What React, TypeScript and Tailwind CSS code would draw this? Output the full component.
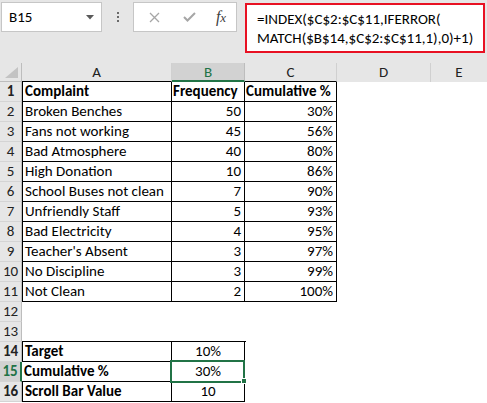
import React from "react";

const FONT = { fontFamily: 'Carlito, "Liberation Sans", Arial, sans-serif' };

type Row = { a?: string; b?: string; c?: string; bold?: boolean };

const rows: Row[] = [
  { a: "Complaint", b: "Frequency", c: "Cumulative %", bold: true },
  { a: "Broken Benches", b: "50", c: "30%" },
  { a: "Fans not working", b: "45", c: "56%" },
  { a: "Bad Atmosphere", b: "40", c: "80%" },
  { a: "High Donation", b: "10", c: "86%" },
  { a: "School Buses not clean", b: "7", c: "90%" },
  { a: "Unfriendly Staff", b: "5", c: "93%" },
  { a: "Bad Electricity", b: "4", c: "95%" },
  { a: "Teacher's Absent", b: "3", c: "97%" },
  { a: "No Discipline", b: "3", c: "99%" },
  { a: "Not Clean", b: "2", c: "100%" },
];

function RowHeader({ n, selected }: { n: number; selected?: boolean }) {
  return selected ? (
    <div className="w-[22px] shrink-0 h-full flex items-end justify-center bg-[#d2d2d2] text-[#217346] border-r-2 border-r-[#217346] border-b border-b-[#d4d4d4] leading-[19px]">
      {n}
    </div>
  ) : (
    <div className="w-[22px] shrink-0 h-full flex items-end justify-center bg-[#e6e6e6] text-[#222] border-r border-r-[#bdbdbd] border-b border-b-[#d4d4d4] leading-[19px]">
      {n}
    </div>
  );
}

export default function App() {
  return (
    <div className="w-[487px] h-[403px] overflow-hidden bg-white text-black text-[15px] relative" style={FONT}>
      {/* top formula area */}
      <div className="h-[63px] bg-[#e6e6e6] flex items-start pt-[2px] pl-[1px]">
        <div className="w-[101px] h-[30px] bg-white border border-[#c6c6c6] flex items-center justify-between pl-[7px] pr-[7px]">
          <span className="text-[15px] leading-none">B15</span>
          <svg width="8" height="5" viewBox="0 0 8 5" className="mt-[1px]">
            <path d="M0 0 L8 0 L4 4.5 Z" fill="#5a5a5a" />
          </svg>
        </div>
        <div className="w-[31px] h-[30px] flex flex-col items-center justify-center gap-[2px]">
          <span className="w-[2px] h-[2px] bg-[#6a6a6a]" />
          <span className="w-[2px] h-[2px] bg-[#6a6a6a]" />
          <span className="w-[2px] h-[2px] bg-[#6a6a6a]" />
        </div>
        <div className="w-[104px] h-[30px] bg-white border border-[#c6c6c6] flex items-center">
          <div className="w-[36px] flex justify-center ml-[2px]">
            <svg width="11" height="11" viewBox="0 0 11 11">
              <path d="M1 1 L10 10 M10 1 L1 10" stroke="#a6a6a6" strokeWidth="1.3" />
            </svg>
          </div>
          <div className="w-[34px] flex justify-center">
            <svg width="13" height="10" viewBox="0 0 13 10">
              <path d="M1 5 L4.5 8.5 L12 1" stroke="#a6a6a6" strokeWidth="2" fill="none" />
            </svg>
          </div>
          <div className="flex-1 flex justify-center">
            <span className="italic text-[#404040] text-[16px] leading-none" style={{ fontFamily: '"Liberation Serif", "DejaVu Serif", serif' }}>
              f<span className="text-[13px]">x</span>
            </span>
          </div>
        </div>
        <div className="ml-[8px] mt-[1px] w-[240px] h-[50px] bg-white border-2 border-[#e81123] pl-[10px] pt-[5px] leading-[19px] text-[15px]">
          <div>=INDEX($C$2:$C$11,IFERROR(</div>
          <div>MATCH($B$14,$C$2:$C$11,1),0)+1)</div>
        </div>
      </div>

      {/* column headers */}
      <div className="h-[19px] flex bg-[#e6e6e6] text-[#222] leading-[18px]">
        <div className="w-[22px] shrink-0 h-full border-r border-r-[#bdbdbd] border-b border-b-[#bdbdbd] relative">
          <svg width="13" height="11" viewBox="0 0 13 11" className="absolute left-[5px] top-[4px]">
            <path d="M13 0 L13 11 L0 11 Z" fill="#c3c3c3" />
          </svg>
        </div>
        <div className="w-[150px] shrink-0 h-full text-center border-r border-r-[#d0d0d0] border-b border-b-black">A</div>
        <div className="w-[73px] shrink-0 h-full text-center bg-[#d2d2d2] text-[#217346] border-r border-r-[#bdbdbd] border-b-2 border-b-[#217346]">B</div>
        <div className="w-[92px] shrink-0 h-full text-center border-r border-r-[#d0d0d0] border-b border-b-black">C</div>
        <div className="w-[94px] shrink-0 h-full text-center border-r border-r-[#d0d0d0]">D</div>
        <div className="flex-1 h-full text-center">E</div>
      </div>

      {/* data rows 1-11 */}
      {rows.map((r, i) => (
        <div key={i} className={`h-[20px] flex ${r.bold ? "font-bold" : ""}`}>
          <RowHeader n={i + 1} />
          <div className="w-[150px] shrink-0 h-full border-l border-r border-b border-black pl-[2px] leading-[19px] whitespace-nowrap overflow-hidden">{r.a}</div>
          <div className={`w-[73px] shrink-0 h-full border-r border-b border-black leading-[19px] whitespace-nowrap overflow-hidden ${r.bold ? "pl-[1px]" : "text-right pr-[3px]"}`}>{r.b}</div>
          <div className={`w-[92px] shrink-0 h-full border-r border-b border-black leading-[19px] whitespace-nowrap overflow-hidden ${r.bold ? "pl-[1px]" : "text-right pr-[3px]"}`}>{r.c}</div>
          <div className="flex-1" />
        </div>
      ))}

      {/* row 12 */}
      <div className="h-[20px] flex">
        <RowHeader n={12} />
        <div className="flex-1" />
      </div>
      {/* row 13 */}
      <div className="h-[20px] flex">
        <RowHeader n={13} />
        <div className="w-[151px] shrink-0 h-full border-b border-black" />
        <div className="w-[73px] shrink-0 h-full border-b border-black" />
        <div className="flex-1" />
      </div>
      {/* row 14 */}
      <div className="h-[20px] flex font-bold">
        <RowHeader n={14} />
        <div className="w-[150px] shrink-0 h-full border-l border-r border-b border-black pl-[2px] leading-[19px]">Target</div>
        <div className="w-[73px] shrink-0 h-full border-r border-b border-black leading-[19px] text-center font-normal">10%</div>
        <div className="flex-1" />
      </div>
      {/* row 15 */}
      <div className="h-[20px] flex font-bold">
        <RowHeader n={15} selected />
        <div className="w-[150px] shrink-0 h-full border-l-0 border-r border-b border-black pl-[2px] leading-[19px]">Cumulative %</div>
        <div className="w-[73px] shrink-0 h-full border-r border-b border-black leading-[19px] text-center font-normal relative">
          30%
          <div className="absolute left-[-2px] top-[-2px] w-[75px] h-[23px] border-2 border-[#217346] pointer-events-none" />
          <div className="absolute left-[69px] top-[16px] w-[6px] h-[6px] bg-[#217346] border border-white" />
        </div>
        <div className="flex-1" />
      </div>
      {/* row 16 */}
      <div className="h-[20px] flex font-bold">
        <RowHeader n={16} />
        <div className="w-[150px] shrink-0 h-full border-l border-r border-b border-black pl-[2px] leading-[19px]">Scroll Bar Value</div>
        <div className="w-[73px] shrink-0 h-full border-r border-b border-black leading-[19px] text-center font-normal">10</div>
        <div className="flex-1" />
      </div>
    </div>
  );
}
